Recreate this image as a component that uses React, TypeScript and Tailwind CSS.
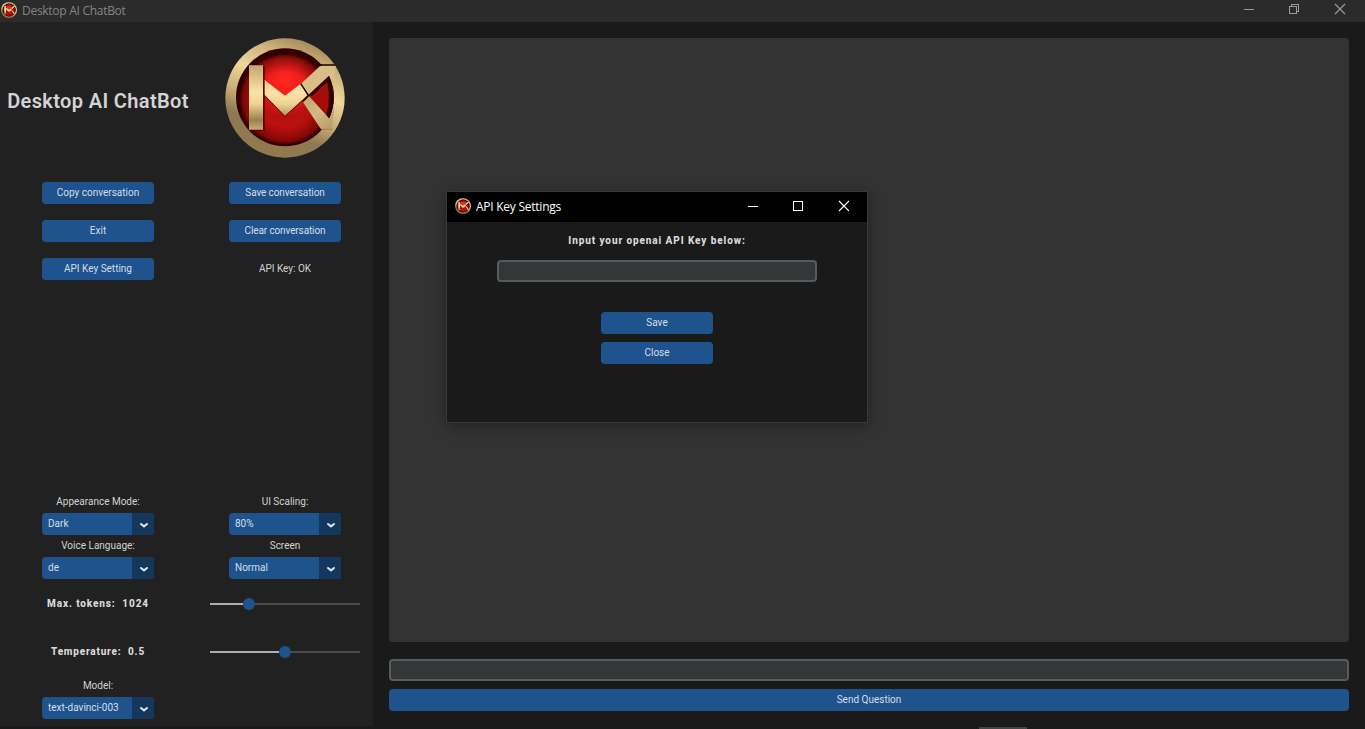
import React from "react";

function Logo({ className }: { className: string }) {
  const id = React.useId();
  const gold = `url(#${id}g)`;
  const bar = `url(#${id}b)`;
  return (
    <svg viewBox="30 24 360 360" className={className}>
      <defs>
        <linearGradient id={id + "g"} x1="110" y1="384" x2="250" y2="24" gradientUnits="userSpaceOnUse">
          <stop offset="0" stopColor="#96794d" />
          <stop offset="0.28" stopColor="#8f7852" />
          <stop offset="0.45" stopColor="#c9ae79" />
          <stop offset="0.65" stopColor="#efd79b" />
          <stop offset="0.85" stopColor="#cdb27b" />
          <stop offset="1" stopColor="#a58a5b" />
        </linearGradient>
        <linearGradient id={id + "b"} x1="0" y1="106" x2="0" y2="299" gradientUnits="userSpaceOnUse">
          <stop offset="0" stopColor="#c4a66b" />
          <stop offset="0.42" stopColor="#fae4a9" />
          <stop offset="0.6" stopColor="#efd392" />
          <stop offset="0.85" stopColor="#9b8052" />
          <stop offset="1" stopColor="#c9ab70" />
        </linearGradient>
        <linearGradient id={id + "k"} x1="265" y1="200" x2="350" y2="297" gradientUnits="userSpaceOnUse">
          <stop offset="0" stopColor="#c2a671" />
          <stop offset="0.5" stopColor="#d3b984" />
          <stop offset="1" stopColor="#b79c6b" />
        </linearGradient>
        <radialGradient id={id + "r"} cx="210" cy="150" r="170" gradientUnits="userSpaceOnUse">
          <stop offset="0" stopColor="#ff2820" />
          <stop offset="0.35" stopColor="#ea1c18" />
          <stop offset="0.65" stopColor="#b5100e" />
          <stop offset="1" stopColor="#c5110f" />
        </radialGradient>
        <radialGradient id={id + "s"} cx="210" cy="208" r="136" gradientUnits="userSpaceOnUse">
          <stop offset="0.6" stopColor="#3a0000" stopOpacity="0" />
          <stop offset="0.92" stopColor="#3a0000" stopOpacity="0.5" />
          <stop offset="1" stopColor="#3a0000" stopOpacity="0.9" />
        </radialGradient>
      </defs>
      <circle cx="210" cy="204" r="179" fill={gold} />
      <circle cx="210" cy="202" r="147" fill="#330000" />
      <circle cx="210" cy="208" r="134" fill={`url(#${id}r)`} />
      <circle cx="210" cy="208" r="136" fill={`url(#${id}s)`} />
      <path d="M106 109h43v193h-43zM149 152l61 48 52-40 20 34-72 66-61-61z" fill="#420000" fillOpacity="0.8" />
      <path d="M102 106h42v193h-42z" fill={bar} />
      <path d="M149 150l61 47 47-36 20 35-67 61-61-62z" fill={bar} />
      <path d="M258 161L316 107h46l-6 70-14-39-61 56z" fill="#d9bf87" />
      <path d="M263 215l18-18 62 68 12-35 3 10-8 58h-32z" fill={`url(#${id}k)`} />
      <path d="M281 195l61-57c18 37 18 88 1 127z" fill="#a50d0b" />
      <path d="M281 195l61-57 4 10-6 5-50 46zM342 138c18 37 18 88 1 127l-9-10c10-32 10-69 0-110z" fill="#2d0000" />
      <path d="M257 161l24 36-18 18M315 105h46" fill="none" stroke="#160300" strokeWidth="4" />
      <path d="M318 298h35" stroke="#77613c" strokeWidth="1.5" />
    </svg>
  );
}

function Button({ children, className = "w-28" }: { children: React.ReactNode; className?: string }) {
  return (
    <button className={`block h-[22px] rounded-[4px] bg-[#1f538d] text-center text-[10px] leading-[22px] text-[#d5deea] ${className}`}>
      {children}
    </button>
  );
}

function Select({ label, value }: { label: string; value: string }) {
  return (
    <div className="flex flex-col items-center">
      <span className="h-[22px] text-[10px] leading-[21px] text-[#d2d2d2]">{label}</span>
      <div className="flex h-[22px] w-28 overflow-hidden rounded-[4px] bg-[#1f538d]">
        <span className="w-[90px] pl-1.5 text-[10px] leading-[22px] text-[#d5deea]">{value}</span>
        <span className="flex w-[22px] items-center justify-center bg-[#14375e]">
          <svg viewBox="0 0 8 5" className="ml-px mt-0.5 h-[5px] w-2">
            <path d="M1 1l3 2.4L7 1" fill="none" stroke="#dce4ee" strokeWidth="2" strokeLinecap="round" strokeLinejoin="round" />
          </svg>
        </span>
      </div>
    </div>
  );
}

function Slider({ label, value, className }: { label: string; value: number; className: string }) {
  return (
    <div className="grid h-12 grid-cols-[196px_178px] items-start">
      <span className={`whitespace-pre text-center text-[10px] font-extrabold leading-6 text-[#dadada] ${className}`}>{label}</span>
      <div className="flex h-6 w-[150px] items-center justify-self-center">
        <div className="h-0.5 bg-[#aab0b5]" style={{ width: value - 6 }} />
        <div className="size-3 shrink-0 rounded-full bg-[#1f538d]" />
        <div className="h-0.5 grow bg-[#4a4d50]" />
      </div>
    </div>
  );
}

function ApiKeyWindow() {
  return (
    <div className="absolute left-[446px] top-[191px] flex h-[232px] w-[422px] flex-col border border-[#393939] bg-[#1a1a1a] shadow-[0_3px_14px_rgba(0,0,0,0.35)]">
      <header className="flex h-[30px] shrink-0 items-center bg-black pl-2">
        <Logo className="-mt-0.5 size-4" />
        <span className="ml-[5px] font-['Open_Sans'] text-xs tracking-[-0.25px] text-white">API Key Settings</span>
        <svg viewBox="0 0 102 12" className="-mt-0.5 ml-auto mr-[18px] h-3 w-[102px]" fill="none" stroke="#fff" shapeRendering="crispEdges">
          <path d="M1 6.5h10M46.5 1.5h9v9h-9z" />
          <path d="M92 1l10 10M102 1l-10 10" shapeRendering="auto" strokeWidth="1.2" />
        </svg>
      </header>
      <div className="flex flex-col items-center pt-[7px]">
        <span className="h-[31px] text-[10px] font-extrabold leading-[23px] tracking-[0.9px] text-[#dadada]">Input your openai API Key below:</span>
        <input aria-label="API key" className="h-[22px] w-80 rounded-[4px] border-2 border-[#565b5e] bg-[#343638]" />
        <div className="mt-[30px] flex flex-col gap-2">
          <Button>Save</Button>
          <Button>Close</Button>
        </div>
      </div>
    </div>
  );
}

export default function App() {
  return (
    <div className="relative flex h-[729px] w-[1365px] flex-col overflow-hidden bg-[#1a1a1a] font-['Roboto',sans-serif]">
      <header className="flex h-[22px] shrink-0 items-center bg-[#2b2b2b] pl-px">
        <Logo className="-mt-0.5 size-4" />
        <span className="ml-[5px] font-['Open_Sans'] text-xs tracking-[-0.28px] text-[#858585]">Desktop AI ChatBot</span>
        <svg viewBox="0 0 102 12" className="-mt-1 ml-auto mr-[19px] h-3 w-[102px]" fill="none" stroke="#999" shapeRendering="crispEdges">
          <path d="M0 6.5h10M45.5 3.5h7v7h-7zM47.5 3v-1.500h7v7h-2" />
          <path d="M91 1l10 10M101 1l-10 10" shapeRendering="auto" strokeWidth="1.2" />
        </svg>
      </header>
      <div className="flex h-[704px]">
        <aside className="flex w-[373px] shrink-0 flex-col overflow-hidden bg-[#212121] pb-[7px] pt-4">
          <div className="grid h-36 shrink-0 grid-cols-[196px_178px] items-start justify-items-center">
            <h1 className="mt-[51px] whitespace-nowrap text-[20px] font-semibold leading-6 tracking-[0.36px] text-[#d4d4d4]">Desktop AI ChatBot</h1>
            <Logo className="size-[120px]" />
          </div>
          <div className="grid shrink-0 grid-cols-[196px_178px] justify-items-center gap-y-4">
            <Button>Copy conversation</Button>
            <Button className="w-28 tracking-[-0.12px]">Save conversation</Button>
            <Button>Exit</Button>
            <Button className="w-28 tracking-[-0.12px]">Clear conversation</Button>
            <Button>API Key Setting</Button>
            <span className="text-[10px] leading-[22px] text-[#d2d2d2]">API Key: OK</span>
          </div>
          <div className="mt-auto grid grid-cols-[196px_178px] justify-items-center">
            <Select label="Appearance Mode:" value="Dark" />
            <Select label="UI Scaling:" value="80%" />
            <Select label="Voice Language:" value="de" />
            <Select label="Screen" value="Normal" />
          </div>
          <div className="mt-[13px]">
            <Slider label="Max. tokens:  1024" value={39} className="tracking-[0.88px]" />
            <Slider label="Temperature:  0.5" value={75} className="tracking-[0.8px]" />
          </div>
          <div className="-mt-[13px] grid grid-cols-[196px] justify-items-center">
            <Select label="Model:" value="text-davinci-003" />
          </div>
        </aside>
        <main className="flex grow flex-col px-4 pt-4">
          <div className="h-[604px] rounded-[4px] bg-[#333333]" />
          <input aria-label="Question" className="mt-[17px] h-[22px] w-full rounded-[4px] border-2 border-[#565b5e] bg-[#343638]" />
          <Button className="mt-2 w-full">Send Question</Button>
        </main>
      </div>
      <footer className="flex grow items-end bg-[#1c191d] pl-[979px]">
        <div className="h-0.5 w-12 bg-[#454346]" />
      </footer>
      <ApiKeyWindow />
    </div>
  );
}
